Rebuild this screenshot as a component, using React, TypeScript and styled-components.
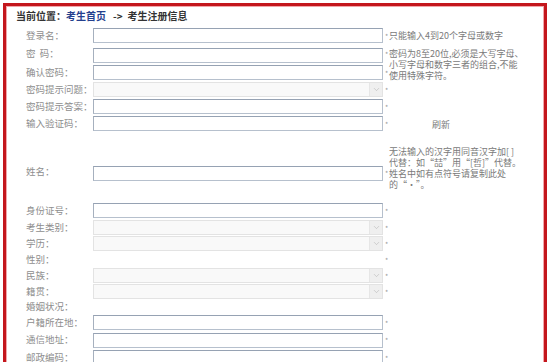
import { Fragment } from "react";
import styled, { createGlobalStyle } from "styled-components";
import { ChevronDown } from "lucide-react";

const GlobalStyle = createGlobalStyle`
  html, body {
    margin: 0;
    padding: 0;
    overflow: hidden;
    background: #fff;
  }
  body {
    font-family: "Noto Sans CJK SC", "Liberation Sans", sans-serif;
  }
`;

const Frame = styled.div`
  margin: 3px 3px 0;
  height: 420px;
  border: 3px solid #c4161c;
  box-shadow: inset 0 0 0 1px #f2a6aa;
  background: #fff;
`;

const Crumb = styled.div`
  height: 21px;
  line-height: 19px;
  padding-left: 10px;
  font-size: 10px;
  font-weight: bold;
  color: #333;
  white-space: nowrap;
  a {
    color: #24408e;
    text-decoration: none;
  }
  span {
    margin: 0 5px 0 7px;
  }
`;

const Form = styled.div`
  display: grid;
  padding-left: 20px;
  grid-template-columns: 67px 290px 6px 160px;
  grid-template-rows: 17px 20px 17px 17px 17px 17px 13px 37px 20px 17px 17px 16px 15px 17px 16px 14px 17px 18px 17px;
`;

type Cell = { $row: number; $span?: number; $end?: boolean };

const Label = styled.div<Cell>`
  grid-column: 1;
  grid-row: ${(p) => p.$row} / span ${(p) => p.$span ?? 1};
  align-self: ${(p) => (p.$end ? "end" : "center")};
  margin-bottom: ${(p) => (p.$end ? "3px" : "0")};
  padding-bottom: 2px;
  font-size: 9.5px;
  line-height: 12px;
  color: #8e8e8e;
  white-space: pre;
`;

const TextBox = styled.input<Cell>`
  grid-column: 2;
  grid-row: ${(p) => p.$row};
  align-self: end;
  box-sizing: border-box;
  width: 100%;
  height: 15px;
  margin: 0 0 1px;
  padding: 0;
  border: 1px solid #b6c0cd;
  border-top-color: #96a2b3;
  border-left-color: #a6b0be;
  background: #fff;
  outline: none;
`;

const SelectBox = styled.div<Cell>`
  grid-column: 2;
  grid-row: ${(p) => p.$row};
  align-self: end;
  box-sizing: border-box;
  height: 15px;
  margin-bottom: 1px;
  display: flex;
  justify-content: flex-end;
  border: 1px solid #e3e3e3;
  background: #f9f9f9;
`;

const Arrow = styled.div`
  width: 12px;
  display: flex;
  align-items: center;
  justify-content: center;
  background: #efefef;
  border-left: 1px solid #e6e6e6;
  color: #b4b4b4;
`;

const Star = styled.div<Cell>`
  grid-column: 3;
  grid-row: ${(p) => p.$row};
  align-self: ${(p) => (p.$end ? "end" : "center")};
  margin-bottom: ${(p) => (p.$end ? "5px" : "0")};
  padding-left: 2px;
  font-size: 7px;
  line-height: 8px;
  color: #9a9a9a;
`;

const Hint = styled.div<Cell & { $pad?: number; $left?: number }>`
  grid-column: 4;
  grid-row: ${(p) => p.$row} / span ${(p) => p.$span ?? 1};
  align-self: start;
  padding-top: ${(p) => p.$pad ?? 0}px;
  padding-left: ${(p) => p.$left ?? 0}px;
  font-size: 9px;
  line-height: 11px;
  color: #7a7a7a;
  white-space: nowrap;
`;

const HintLine = styled.div`
  height: 11px;
  line-height: 11px;
  overflow: visible;
`;

type Field = { label: string; kind: "input" | "select" | "none"; row: number; star: boolean; end?: boolean };

const fields: Field[] = [
  { label: "登录名：", kind: "input", row: 1, star: true },
  { label: "密  码：", kind: "input", row: 2, star: true },
  { label: "确认密码：", kind: "input", row: 3, star: true },
  { label: "密码提示问题：", kind: "select", row: 4, star: true },
  { label: "密码提示答案：", kind: "input", row: 5, star: true },
  { label: "输入验证码：", kind: "input", row: 6, star: true },
  { label: "姓名：", kind: "input", row: 8, star: true, end: true },
  { label: "身份证号：", kind: "input", row: 10, star: true },
  { label: "考生类别：", kind: "select", row: 11, star: true },
  { label: "学历：", kind: "select", row: 12, star: true },
  { label: "性别：", kind: "none", row: 13, star: true },
  { label: "民族：", kind: "select", row: 14, star: true },
  { label: "籍贯：", kind: "select", row: 15, star: true },
  { label: "婚姻状况：", kind: "none", row: 16, star: false },
  { label: "户籍所在地：", kind: "input", row: 17, star: true },
  { label: "通信地址：", kind: "input", row: 18, star: true },
  { label: "邮政编码：", kind: "input", row: 19, star: true },
];

const pwdHint = ["密码为8至20位,必须是大写字母、", "小写字母和数字三者的组合,不能", "使用特殊字符。"];
const nameHint = ["无法输入的汉字用同音汉字加[ ]", "代替：如“喆”用“[哲]”代替。", "姓名中如有点符号请复制此处", "的“·”。"];

export default function App() {
  return (
    <>
      <GlobalStyle />
      <Frame>
        <Crumb>
          当前位置：<a href="#">考生首页</a>
          <span>-&gt;</span>考生注册信息
        </Crumb>
        <Form>
          {fields.map((f) => (
            <Fragment key={f.label}>
              <Label $row={f.row} $end={f.end}>
                {f.label}
              </Label>
              {f.kind === "input" && <TextBox $row={f.row} />}
              {f.kind === "select" && (
                <SelectBox $row={f.row}>
                  <Arrow>
                    <ChevronDown size={9} strokeWidth={1.5} />
                  </Arrow>
                </SelectBox>
              )}
              {f.star && (
                <Star $row={f.row} $end={f.end}>
                  *
                </Star>
              )}
            </Fragment>
          ))}
          <Hint $row={1} $pad={3}>只能输入4到20个字母或数字</Hint>
          <Hint $row={2} $span={2} $pad={4}>
            {pwdHint.map((t) => (
              <HintLine key={t}>{t}</HintLine>
            ))}
          </Hint>
          <Hint $row={6} $pad={4} $left={43}>刷新</Hint>
          <Hint $row={8} $span={2} $pad={1}>
            {nameHint.map((t) => (
              <HintLine key={t}>{t}</HintLine>
            ))}
          </Hint>
        </Form>
      </Frame>
    </>
  );
}
